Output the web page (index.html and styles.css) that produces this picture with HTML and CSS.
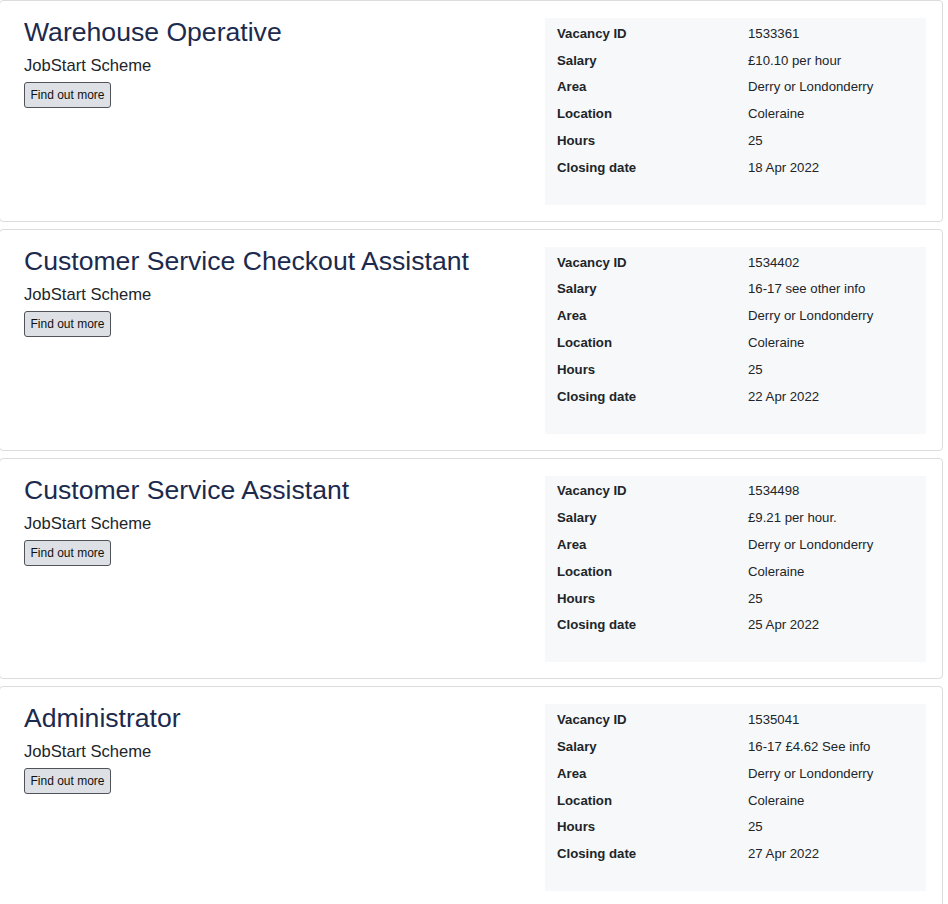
FILE: index.html
```html
<!DOCTYPE html>
<html lang="en">
<head>
<meta charset="utf-8">
<title>Vacancies</title>
<link rel="stylesheet" href="styles.css">
</head>
<body>
<div class="list">
  <article class="card">
    <div class="summary">
      <h2 class="title">Warehouse Operative</h2>
      <p class="scheme">JobStart Scheme</p>
      <button class="more" type="button">Find out more</button>
    </div>
    <dl class="facts">
      <dt>Vacancy ID</dt><dd>1533361</dd>
      <dt>Salary</dt><dd>£10.10 per hour</dd>
      <dt>Area</dt><dd>Derry or Londonderry</dd>
      <dt>Location</dt><dd>Coleraine</dd>
      <dt>Hours</dt><dd>25</dd>
      <dt>Closing date</dt><dd>18 Apr 2022</dd>
    </dl>
  </article>
  <article class="card">
    <div class="summary">
      <h2 class="title">Customer Service Checkout Assistant</h2>
      <p class="scheme">JobStart Scheme</p>
      <button class="more" type="button">Find out more</button>
    </div>
    <dl class="facts">
      <dt>Vacancy ID</dt><dd>1534402</dd>
      <dt>Salary</dt><dd>16-17 see other info</dd>
      <dt>Area</dt><dd>Derry or Londonderry</dd>
      <dt>Location</dt><dd>Coleraine</dd>
      <dt>Hours</dt><dd>25</dd>
      <dt>Closing date</dt><dd>22 Apr 2022</dd>
    </dl>
  </article>
  <article class="card">
    <div class="summary">
      <h2 class="title">Customer Service Assistant</h2>
      <p class="scheme">JobStart Scheme</p>
      <button class="more" type="button">Find out more</button>
    </div>
    <dl class="facts">
      <dt>Vacancy ID</dt><dd>1534498</dd>
      <dt>Salary</dt><dd>£9.21 per hour.</dd>
      <dt>Area</dt><dd>Derry or Londonderry</dd>
      <dt>Location</dt><dd>Coleraine</dd>
      <dt>Hours</dt><dd>25</dd>
      <dt>Closing date</dt><dd>25 Apr 2022</dd>
    </dl>
  </article>
  <article class="card">
    <div class="summary">
      <h2 class="title">Administrator</h2>
      <p class="scheme">JobStart Scheme</p>
      <button class="more" type="button">Find out more</button>
    </div>
    <dl class="facts">
      <dt>Vacancy ID</dt><dd>1535041</dd>
      <dt>Salary</dt><dd>16-17 £4.62 See info</dd>
      <dt>Area</dt><dd>Derry or Londonderry</dd>
      <dt>Location</dt><dd>Coleraine</dd>
      <dt>Hours</dt><dd>25</dd>
      <dt>Closing date</dt><dd>27 Apr 2022</dd>
    </dl>
  </article>
</div>
</body>
</html>
```

FILE: styles.css
```css
html, body {
  margin: 0;
  padding: 0;
  background: #fff;
}

body {
  font-family: "Liberation Sans", Arial, sans-serif;
  color: #212529;
  overflow: hidden;
}

.list {
  margin-left: -1px;
  width: 944px;
  display: flex;
  flex-direction: column;
  gap: 7px;
}

.card {
  box-sizing: border-box;
  border: 1px solid #dadcde;
  border-radius: 4px;
  padding: 16px 16px 16px 24px;
  display: grid;
  grid-template-columns: 1fr 381px;
  column-gap: 16px;
}

.summary {
  display: flex;
  flex-direction: column;
  align-items: flex-start;
}

.title {
  margin: 0;
  font-size: 26.6px;
  line-height: 31px;
  font-weight: normal;
  color: #1c2a4d;
}

.scheme {
  margin: 8px 0 0;
  font-size: 16.6px;
  line-height: 20px;
  color: #212529;
}

.more {
  margin-top: 6px;
  height: 26px;
  padding: 0 5.5px;
  font-family: inherit;
  font-size: 12px;
  color: #111;
  background: #dde0e5;
  border: 1px solid #50545a;
  border-radius: 3px;
}

.facts {
  margin: 1px 0 0;
  padding: 2px 12px 24px;
  background: #f6f8fa;
  display: grid;
  grid-template-columns: 191px 1fr;
  grid-auto-rows: 26.8px;
  align-items: center;
  font-size: 13.2px;
  color: #212529;
}

.facts dt {
  font-weight: bold;
}

.facts dd {
  margin: 0;
}
```
